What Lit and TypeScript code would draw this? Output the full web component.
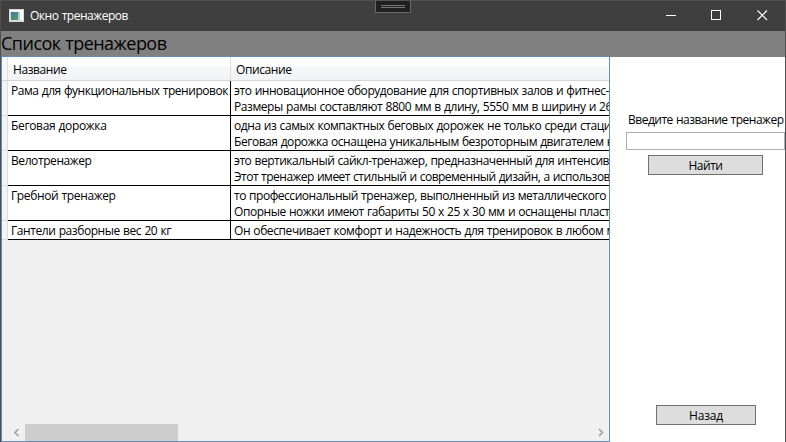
import { LitElement, html, css } from "lit";
import { customElement, property } from "lit/decorators.js";

interface Line { text: string; width: number; }
interface Row { name: Line; lines: Line[]; }

const ROWS: Row[] = [
  { name: { text: "Рама для функциональных тренировок", width: 217 }, lines: [
    { text: "это инновационное оборудование для спортивных залов и фитнес-", width: 375 },
    { text: "Размеры рамы составляют 8800 мм в длину, 5550 мм в ширину и 26", width: 378 } ] },
  { name: { text: "Беговая дорожка", width: 95.5 }, lines: [
    { text: "одна из самых компактных беговых дорожек не только среди стаци", width: 377 },
    { text: "Беговая дорожка оснащена уникальным безроторным двигателем н", width: 380 } ] },
  { name: { text: "Велотренажер", width: 80.5 }, lines: [
    { text: "это вертикальный сайкл-тренажер, предназначенный для интенсив", width: 375 },
    { text: "Этот тренажер имеет стильный и современный дизайн, а использов", width: 376 } ] },
  { name: { text: "Гребной тренажер", width: 104.5 }, lines: [
    { text: "то профессиональный тренажер, выполненный из металлического", width: 372 },
    { text: "Опорные ножки имеют габариты 50 х 25 х 30 мм и оснащены пласт", width: 375.5 } ] },
  { name: { text: "Гантели разборные вес 20 кг", width: 160 }, lines: [
    { text: "Он обеспечивает комфорт и надежность для тренировок в любом м", width: 381 } ] },
];

/** A single line of text whose tracking is adjusted to fill a given width. */
@customElement("fit-text")
export class FitText extends LitElement {
  @property() text = "";
  @property({ type: Number }) width = 0;
  static styles = css`
    :host { display: block; white-space: pre; }
    .run { display: inline-block; }
  `;
  async updated() {
    await document.fonts.ready;
    const run = this.renderRoot.querySelector<HTMLElement>(".run");
    if (!run || !this.width) return;
    run.style.letterSpacing = "0px";
    const natural = run.getBoundingClientRect().width;
    run.style.letterSpacing = `${(this.width - natural) / this.text.length}px`;
  }
  render() { return html`<span class="run">${this.text}</span>`; }
}

@customElement("app-root")
export class AppRoot extends LitElement {
  static styles = css`
    * { box-sizing: border-box; }
    :host {
      display: flex; flex-direction: column; position: relative; box-sizing: border-box;
      width: 786px; height: 442px; overflow: hidden;
      border: 1px solid #505050; border-bottom: 0; background: #fff; color: #000;
      font: 12px/16px "Open Sans", "Noto Sans", sans-serif; word-spacing: 0.5px;
    }
    .titlebar { display: flex; align-items: center; height: 30px; flex: none; background: #3f3f3f; color: #fff; padding-left: 8px; }
    .appicon { width: 15px; height: 13px; display: block; margin: 0 6px 2px 0; }
    .caption { flex: 1; }
    .win { display: flex; margin-right: -2px; }
    .win svg { width: 46px; height: 30px; display: block; }
    .handle {
      position: absolute; left: 374px; top: -1px; width: 36px; height: 13px;
      background: #1f1f1f; border: 1px solid #686868; padding: 4px 5px;
      display: flex; flex-direction: column; gap: 1px;
    }
    .bar { height: 1px; background: #777; }
    .heading { height: 26px; flex: none; background: #808080; font-size: 18px; line-height: 25px; }
    .body { flex: 1; display: flex; min-height: 0; }
    .grid {
      width: 609px; margin-top: -1px; flex: none; border: 1px solid #688caf; background: #f0f0f0;
      display: flex; flex-direction: column; overflow: hidden;
    }
    .head { display: flex; height: 24px; flex: none; background: linear-gradient(#fff 0 40%, #f7f8fa 41%, #f1f2f4); border-bottom: 1px solid #d5d5d5; }
    .corner { width: 6px; flex: none; border-right: 1px solid #e0e0e0; background: #f5f6f7; }
    .h1 { width: 223px; flex: none; border-right: 1px solid #dcdde0; padding: 5px 0 0 5px; }
    .h2 { padding: 5px 0 0 5px; }
    .row { display: flex; flex: none; }
    .rh { width: 6px; flex: none; background: #f3f4f6; border-right: 1px solid #ddd; border-bottom: 1px solid #dcdfe4; }
    .cell { background: #fff; border-bottom: 1px solid #000; padding: 2px 0 0 3px; overflow: hidden; }
    .name { width: 223px; flex: none; border-right: 1px solid #000; }
    .desc { flex: 1; min-width: 0; }
    .space { flex: 1; }
    .scroll { height: 17px; flex: none; display: flex; padding: 0 0 0 6px; }
    .scroll svg { width: 17px; height: 17px; display: block; }
    .track { flex: 1; }
    .thumb { width: 153px; height: 17px; background: #cdcdcd; }
    .side { flex: 1; display: flex; flex-direction: column; min-width: 0; padding: 55px 0 17px 16px; }
    .label { margin-left: 2px; }
    .input { height: 18px; margin-top: 4px; flex: none; border: 1px solid #abadb3; background: #fff; }
    .btn { height: 20px; padding-top: 2px; border: 1px solid #707070; background: #ddd; display: flex; justify-content: center; align-items: center; flex: none; }
    .find { width: 115px; margin: 5px 0 0 22px; }
    .back { width: 100px; margin: auto 0 0 30px; }
  `;

  render() {
    return html`
      <div class="titlebar">
        <svg class="appicon" viewBox="0 0 15 13">
          <defs><linearGradient id="g" x2="1" y2="1"><stop stop-color="#3c78a0"/><stop offset="1" stop-color="#58a070"/></linearGradient></defs>
          <rect width="15" height="13" fill="#d8dadb"/><rect x="1" y="1" width="13" height="2" fill="#f6f6f6"/>
          <rect x="2" y="3" width="7" height="8" fill="url(#g)"/><rect x="9" y="3" width="2" height="8" fill="#b4cfc8"/><rect x="11" y="3" width="3" height="8" fill="#fff"/>
        </svg>
        <fit-text class="caption" text="Окно тренажеров" width="98"></fit-text>
        <div class="win">
          <svg viewBox="0 0 46 30"><path d="M17 14.5h10" stroke="#fff"/></svg>
          <svg viewBox="0 0 46 30"><rect x="16.5" y="9.5" width="9" height="9" fill="none" stroke="#fff"/></svg>
          <svg viewBox="0 0 46 30"><path d="M16.5 9.5l9.5 9.5M26 9.5L16.5 19" stroke="#fff" stroke-width="1.2"/></svg>
        </div>
      </div>
      <div class="handle"><div class="bar"></div><div class="bar"></div></div>
      <fit-text class="heading" text="Список тренажеров" width="165.5"></fit-text>
      <div class="body">
        <div class="grid">
          <div class="head">
            <div class="corner"></div>
            <div class="h1"><fit-text text="Название" width="53.5"></fit-text></div>
            <div class="h2"><fit-text text="Описание" width="55.5"></fit-text></div>
          </div>
          ${ROWS.map((r) => html`
            <div class="row">
              <div class="rh"></div>
              <div class="cell name"><fit-text .text=${r.name.text} .width=${r.name.width}></fit-text></div>
              <div class="cell desc">${r.lines.map((l) => html`<fit-text .text=${l.text} .width=${l.width}></fit-text>`)}</div>
            </div>`)}
          <div class="space"></div>
          <div class="scroll">
            <svg viewBox="0 0 17 17"><path d="M10.5 5L7 8.5l3.5 3.5" fill="none" stroke="#a0a0a0" stroke-width="1.6"/></svg>
            <div class="track"><div class="thumb"></div></div>
            <svg viewBox="0 0 17 17"><path d="M7 5l3.5 3.5L7 12" fill="none" stroke="#a0a0a0" stroke-width="1.6"/></svg>
          </div>
        </div>
        <div class="side">
          <fit-text class="label" text="Введите название тренажер" width="155.5"></fit-text>
          <div class="input"></div>
          <div class="btn find"><fit-text text="Найти" width="34"></fit-text></div>
          <div class="btn back"><fit-text text="Назад" width="34"></fit-text></div>
        </div>
      </div>`;
  }
}
